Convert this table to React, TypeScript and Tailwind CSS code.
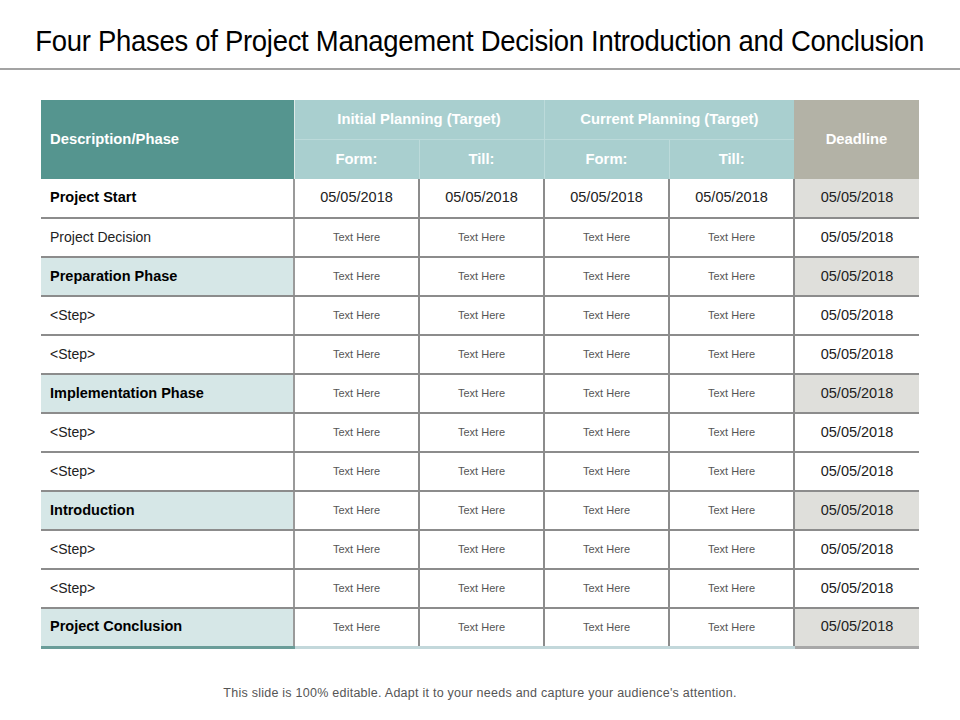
import React from "react";

type Row = { label: string; phase: boolean; dates?: boolean };

const rows: Row[] = [
  { label: "Project Start", phase: true, dates: true },
  { label: "Project Decision", phase: false },
  { label: "Preparation Phase", phase: true },
  { label: "<Step>", phase: false },
  { label: "<Step>", phase: false },
  { label: "Implementation Phase", phase: true },
  { label: "<Step>", phase: false },
  { label: "<Step>", phase: false },
  { label: "Introduction", phase: true },
  { label: "<Step>", phase: false },
  { label: "<Step>", phase: false },
  { label: "Project Conclusion", phase: true },
];

export default function App() {
  return (
    <div className="w-[960px] h-[720px] bg-white flex flex-col font-['Liberation_Sans',Arial,sans-serif] text-[#222]">
      {/* TITLE */}
      <div className="h-[68px] flex items-center justify-center pt-[14px]">
        <h1 className="text-[30px] leading-none text-black whitespace-nowrap scale-x-[0.915] tracking-[-0.3px]">
          Four Phases of Project Management Decision Introduction and Conclusion
        </h1>
      </div>
      <div className="h-[2px] bg-[#a3a3a3]" />

      {/* TABLE */}
      <div className="pl-[41px] pt-[30px]">
        <table className="border-collapse table-fixed w-[878px] text-[14px]">
          <colgroup>
            <col className="w-[253px]" />
            <col className="w-[125px]" />
            <col className="w-[125px]" />
            <col className="w-[125px]" />
            <col className="w-[125px]" />
            <col className="w-[125px]" />
          </colgroup>
          <thead className="text-[14.8px]">
            <tr className="h-[39px]">
              <th rowSpan={2} className="bg-[#55958f] text-white font-bold text-left pl-[9px] border-r border-[#dfe9e8]">
                Description/Phase
              </th>
              <th colSpan={2} className="bg-[#a9cfcf] text-white font-bold border-r border-[#bcdada]">
                Initial Planning (Target)
              </th>
              <th colSpan={2} className="bg-[#a9cfcf] text-white font-bold">
                Current Planning (Target)
              </th>
              <th rowSpan={2} className="bg-[#b3b2a6] text-white font-bold">
                Deadline
              </th>
            </tr>
            <tr className="h-[40px]">
              <th className="bg-[#a9cfcf] text-white font-bold border-t border-r border-[#bcdada]">Form:</th>
              <th className="bg-[#a9cfcf] text-white font-bold border-t border-r border-[#bcdada]">Till:</th>
              <th className="bg-[#a9cfcf] text-white font-bold border-t border-r border-[#bcdada]">Form:</th>
              <th className="bg-[#a9cfcf] text-white font-bold border-t border-[#bcdada]">Till:</th>
            </tr>
          </thead>
          <tbody>
            {rows.map((r, i) => {
              const last = i === rows.length - 1;
              return (
                <tr key={i} className="h-[39px]">
                  <td
                    className={`pl-[9px] border-r-2 border-r-[#9a9a9a] ${
                      last ? "border-b-[3px] border-b-[#6a9d99]" : "border-b-2 border-b-[#8c8c8c]"
                    } ${r.phase && i > 0 ? "bg-[#d6e7e7]" : "bg-white"} ${
                      r.phase ? "font-bold text-black text-[14.5px]" : "text-[#222]"
                    }`}
                  >
                    {r.label}
                  </td>
                  {[0, 1, 2, 3].map((c) => (
                    <td
                      key={c}
                      className={`text-center border-r-2 border-r-[#8c8c8c] ${
                        last ? "border-b-[3px] border-b-[#c3d8db]" : "border-b-2 border-b-[#8c8c8c]"
                      } ${r.dates ? "text-[14.5px] text-[#222]" : "text-[11px] text-[#555]"}`}
                    >
                      {r.dates ? "05/05/2018" : "Text Here"}
                    </td>
                  ))}
                  <td
                    className={`text-center text-[14.5px] text-[#222] ${
                      last ? "border-b-[3px] border-b-[#a8a8a8]" : "border-b-2 border-b-[#8c8c8c]"
                    } ${r.phase ? "bg-[#dfdfdb]" : "bg-white"}`}
                  >
                    05/05/2018
                  </td>
                </tr>
              );
            })}
          </tbody>
        </table>
      </div>

      {/* FOOTER */}
      <div className="mt-auto pb-[17px] text-center text-[12.5px] text-[#555] tracking-[0.25px]">
        This slide is 100% editable. Adapt it to your needs and capture your audience's attention.
      </div>
    </div>
  );
}
